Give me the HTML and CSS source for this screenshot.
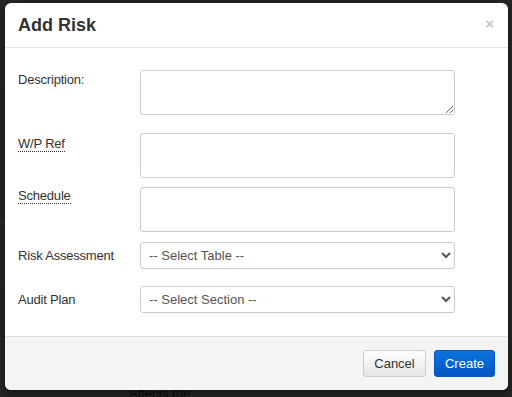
FILE: index.html
```html
<!doctype html>
<html lang="en">
  <head>
    <meta charset="UTF-8" />
    <meta name="viewport" content="width=device-width, initial-scale=1.0" />
    <title>Add Risk</title>
    <link rel="stylesheet" href="styles.css">
  </head>
  <body>
    <div class="backdrop">
      <div class="page-line line-a"></div>
      <div class="page-line line-b"></div>
      <div class="page-line line-c"></div>
      <div class="page-text">Affects the</div>
    </div>

    <div class="modal">
      <div class="modal-header">
        <h3>Add Risk</h3>
        <span class="close">&times;</span>
      </div>

      <div class="modal-body">
        <div class="form-row row-desc">
          <label>Description:</label>
          <textarea class="field tall"></textarea>
        </div>
        <div class="form-row row-ref">
          <label><abbr title="Working Paper Reference">W/P Ref</abbr></label>
          <input class="field tall" type="text" />
        </div>
        <div class="form-row row-sched">
          <label><abbr title="Schedule">Schedule</abbr></label>
          <input class="field tall" type="text" />
        </div>
        <div class="form-row row-risk">
          <label>Risk Assessment</label>
          <select class="field pick">
            <option>-- Select Table --</option>
          </select>
        </div>
        <div class="form-row row-plan">
          <label>Audit Plan</label>
          <select class="field pick">
            <option>-- Select Section --</option>
          </select>
        </div>
      </div>

      <div class="modal-footer">
        <button class="btn btn-cancel">Cancel</button>
        <button class="btn btn-primary">Create</button>
      </div>
    </div>
  </body>
</html>
```

FILE: styles.css
```css
body {
  margin: 0;
  font-family: 'Liberation Sans', Arial, sans-serif;
  background: #262626;
  height: 397px;
  overflow: hidden;
  position: relative;
}

/* faded page behind the overlay */
.backdrop {
  position: absolute;
  inset: 0;
}

.page-line {
  position: absolute;
  left: 0;
  right: 0;
  height: 1px;
  background: #303030;
}

.line-a { top: 83px; }
.line-b { top: 223px; }
.line-c { top: 284px; }

.page-text {
  position: absolute;
  left: 129px;
  top: 386px;
  font-size: 13px;
  line-height: 15px;
  color: #0a0a0a;
}

.modal {
  position: absolute;
  left: 5px;
  top: 3px;
  width: 503px;
  background: #fff;
  border-radius: 6px;
  overflow: hidden;
  box-shadow: 0 3px 9px rgba(0, 0, 0, 0.5);
}

.modal-header {
  height: 44px;
  border-bottom: 1px solid #e5e5e5;
  display: flex;
  align-items: center;
  justify-content: space-between;
  padding: 0 14px 0 13px;
}

.modal-header h3 {
  margin: 0;
  font-size: 18px;
  font-weight: bold;
  color: #333;
}

.close {
  font-size: 15px;
  font-weight: bold;
  color: #c4c4c4;
  margin-top: -4px;
}

.modal-body {
  padding: 22px 0 23px 13px;
}

.form-row {
  display: grid;
  grid-template-columns: 122px 315px;
  align-items: start;
}

.form-row label {
  font-size: 13px;
  letter-spacing: -0.2px;
  color: #333;
}

abbr {
  text-decoration: none;
  border-bottom: 1px dotted #333;
}

.row-desc label { padding-top: 2px; }
.row-ref { margin-top: 18px; }
.row-ref label { padding-top: 3px; }
.row-sched { margin-top: 9px; }
.row-sched label { padding-top: 1px; }
.row-risk { margin-top: 10px; align-items: center; }
.row-plan { margin-top: 17px; align-items: center; }

.field {
  box-sizing: border-box;
  width: 315px;
  margin: 0;
  border: 1px solid #ccc;
  border-radius: 3px;
  background: #fff;
  font-family: inherit;
  font-size: 13px;
  color: #555;
}

.tall {
  height: 45px;
  display: block;
}

textarea.field {
  resize: vertical;
}

.pick {
  height: 27px;
  padding: 0 4px;
}

.modal-footer {
  background: #f4f4f4;
  border-top: 1px solid #ddd;
  display: flex;
  justify-content: flex-end;
  gap: 8px;
  padding: 13px 13px 13px 0;
}

.btn {
  height: 27px;
  padding: 0;
  font-family: inherit;
  font-size: 13px;
  border-radius: 3px;
  border: 1px solid #ccc;
  color: #333;
  background: linear-gradient(#fff, #e6e6e6);
}

.btn-cancel {
  width: 63px;
}

.btn-primary {
  width: 61px;
  color: #fff;
  border-color: #0456c0;
  background: linear-gradient(#0a73dc, #0356c6);
}
```
